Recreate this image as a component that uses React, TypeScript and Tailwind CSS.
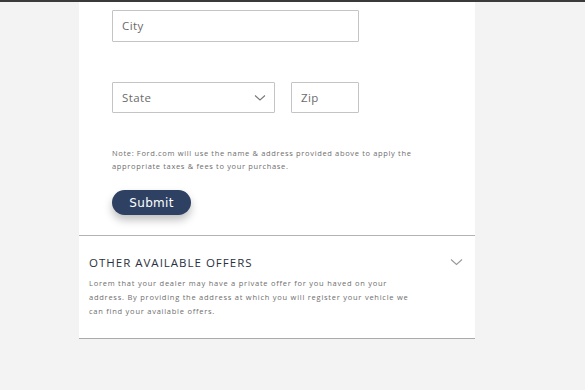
import React from "react";

export default function App() {
  const font = { fontFamily: '"Open Sans", "Liberation Sans", sans-serif' };
  return (
    <div className="h-[390px] w-[585px] overflow-hidden bg-[#f3f3f3] border-t-2 border-[#3a3a3a]" style={font}>
      <div className="ml-[79px] w-[396px] bg-white">
        <div className="pl-[33px] pt-[8px]">
          <div className="h-[32px] w-[247px] border border-[#c4c4c4] rounded-[1px] flex items-center pl-[9px] text-[11.5px] text-[#6b6b6b] tracking-[0.4px]">
            City
          </div>
          <div className="mt-[40px] flex gap-[16px]">
            <div className="h-[31px] w-[163px] border border-[#c4c4c4] rounded-[1px] flex items-center justify-between pl-[9px] pr-[8px] text-[11.5px] text-[#6b6b6b] tracking-[0.4px]">
              <span>State</span>
              <svg width="12" height="8" viewBox="0 0 12 8" fill="none">
                <path d="M1 1.5 L6 6 L11 1.5" stroke="#7a7a7a" strokeWidth="1.1" />
              </svg>
            </div>
            <div className="h-[31px] w-[68px] border border-[#c4c4c4] rounded-[1px] flex items-center pl-[9px] text-[11.5px] text-[#6b6b6b] tracking-[0.4px]">
              Zip
            </div>
          </div>
          <p className="mt-[34px] text-[7.5px] leading-[13px] text-[#6e6e6e] tracking-[0.65px] w-[330px]">
            Note: Ford.com will use the name &amp; address provided above to apply the appropriate taxes &amp; fees to your purchase.
          </p>
          <button className="mt-[17px] h-[25px] w-[79px] rounded-full bg-[#2e4163] text-white text-[12px] flex items-center justify-center shadow-[0_5px_8px_rgba(0,0,0,0.25)] tracking-[0.3px]" style={{ fontFamily: '"DejaVu Sans", sans-serif' }}>
            Submit
          </button>
          <div className="h-[20px]" />
        </div>
        <div className="border-t-[1.5px] border-[#b3b3b3] pt-[20px] pl-[10px] pr-[12px] pb-[20px]">
          <div className="flex items-center justify-between">
            <h2 className="text-[11.5px] text-[#2a3140] tracking-[1px] font-medium leading-[14px]">OTHER AVAILABLE OFFERS</h2>
            <svg width="13" height="8" viewBox="0 0 13 8" fill="none" className="-mt-[3px]">
              <path d="M1 1.5 L6.5 6.5 L12 1.5" stroke="#9a9a9a" strokeWidth="1.1" />
            </svg>
          </div>
          <p className="mt-[6px] text-[7.5px] leading-[14px] text-[#6e6e6e] tracking-[0.75px] w-[326px]">
            Lorem that your dealer may have a private offer for you haved on your address. By providing the address at which you will register your vehicle we can find your available offers.
          </p>
        </div>
        <div className="border-t-[1.5px] border-[#a9a9a9]" />
      </div>
    </div>
  );
}
